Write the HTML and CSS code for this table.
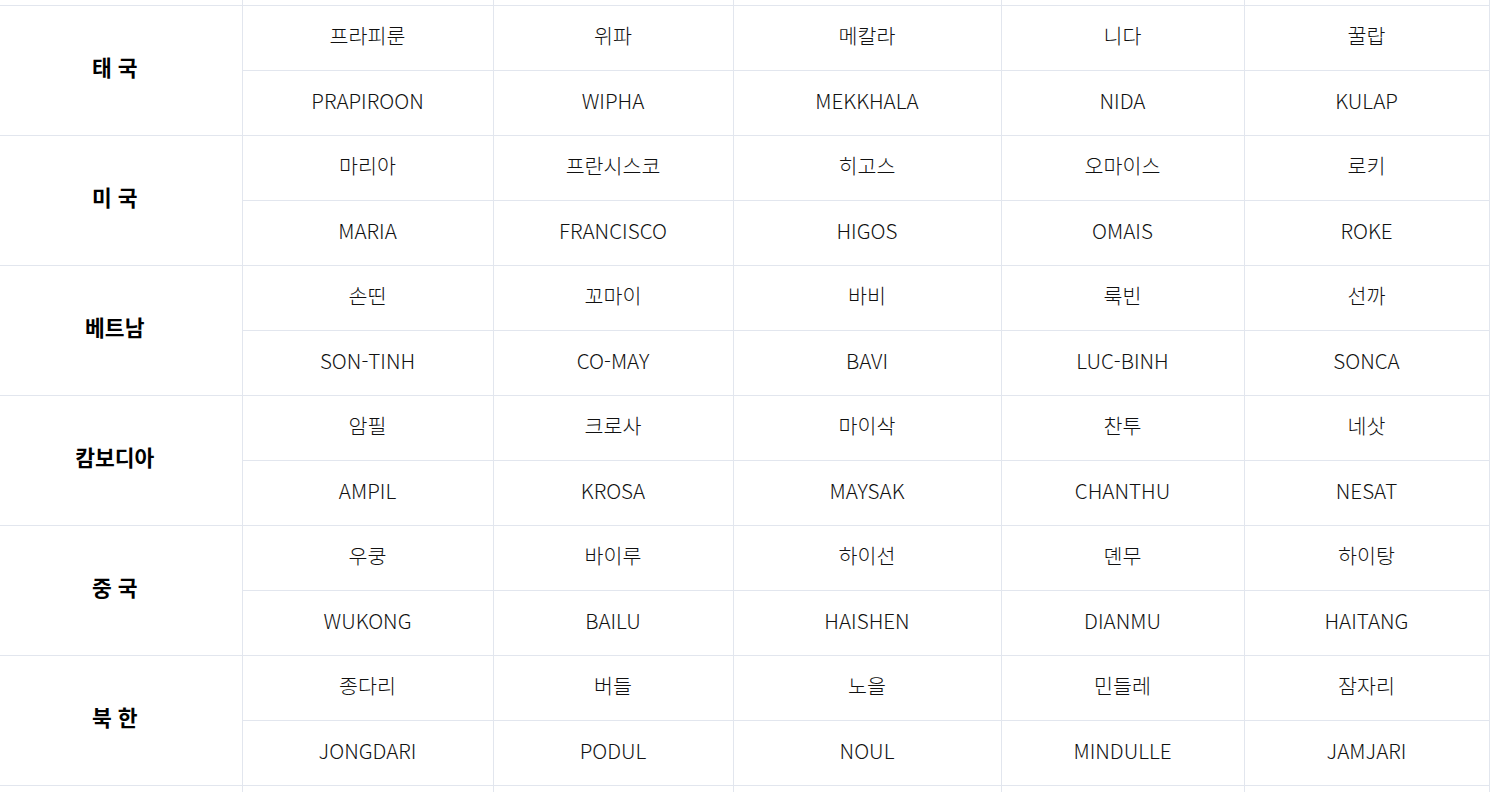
FILE: index.html
```html
<!DOCTYPE html>
<html lang="ko">
<head>
<meta charset="utf-8">
<title>태풍 이름</title>
<link rel="stylesheet" href="styles.css">
</head>
<body>
<table class="names">
  <colgroup>
    <col class="c0"><col class="c1"><col class="c2"><col class="c3"><col class="c4"><col class="c5">
  </colgroup>
  <tbody>
    <tr class="edge top"><td></td><td></td><td></td><td></td><td></td><td></td></tr>
    <tr><th rowspan="2">태 국</th><td>프라피룬</td><td>위파</td><td>메칼라</td><td>니다</td><td>꿀랍</td></tr>
    <tr><td>PRAPIROON</td><td>WIPHA</td><td>MEKKHALA</td><td>NIDA</td><td>KULAP</td></tr>
    <tr><th rowspan="2">미 국</th><td>마리아</td><td>프란시스코</td><td>히고스</td><td>오마이스</td><td>로키</td></tr>
    <tr><td>MARIA</td><td>FRANCISCO</td><td>HIGOS</td><td>OMAIS</td><td>ROKE</td></tr>
    <tr><th rowspan="2">베트남</th><td>손띤</td><td>꼬마이</td><td>바비</td><td>룩빈</td><td>선까</td></tr>
    <tr><td>SON-TINH</td><td>CO-MAY</td><td>BAVI</td><td>LUC-BINH</td><td>SONCA</td></tr>
    <tr><th rowspan="2">캄보디아</th><td>암필</td><td>크로사</td><td>마이삭</td><td>찬투</td><td>네삿</td></tr>
    <tr><td>AMPIL</td><td>KROSA</td><td>MAYSAK</td><td>CHANTHU</td><td>NESAT</td></tr>
    <tr><th rowspan="2">중 국</th><td>우쿵</td><td>바이루</td><td>하이선</td><td>뎬무</td><td>하이탕</td></tr>
    <tr><td>WUKONG</td><td>BAILU</td><td>HAISHEN</td><td>DIANMU</td><td>HAITANG</td></tr>
    <tr><th rowspan="2">북 한</th><td>종다리</td><td>버들</td><td>노을</td><td>민들레</td><td>잠자리</td></tr>
    <tr><td>JONGDARI</td><td>PODUL</td><td>NOUL</td><td>MINDULLE</td><td>JAMJARI</td></tr>
    <tr class="edge bottom"><td></td><td></td><td></td><td></td><td></td><td></td></tr>
  </tbody>
</table>
</body>
</html>
```

FILE: styles.css
```css
html, body {
  margin: 0;
  padding: 0;
  background: #ffffff;
}
body {
  font-family: "Noto Sans CJK KR", "Noto Sans", sans-serif;
  color: #111111;
  overflow: hidden;
}
.names {
  border-collapse: collapse;
  table-layout: fixed;
  width: 1489px;
}
.c0 { width: 242px; }
.c1 { width: 251px; }
.c2 { width: 240px; }
.c3 { width: 268px; }
.c4 { width: 243px; }
.c5 { width: 245px; }
.names td, .names th {
  height: 59px;
  padding: 0 0 5px;
  border: 1px solid #e2e6ee;
  text-align: center;
  vertical-align: middle;
  font-size: 20.6px;
  font-weight: 300;
  line-height: 1;
}
.names td:first-child, .names th {
  border-left: none;
}
.names td:last-child {
  border-right: 1px solid #e2e6ee;
}
.names th {
  font-size: 21.5px;
  font-weight: 700;
  padding: 0 12px 7px 0;
  color: #000000;
}
.edge.top td {
  height: 5px;
  padding: 0;
  border-top: none;
}
.edge.bottom td {
  height: 10px;
  padding: 0;
  border-bottom: none;
}
```
